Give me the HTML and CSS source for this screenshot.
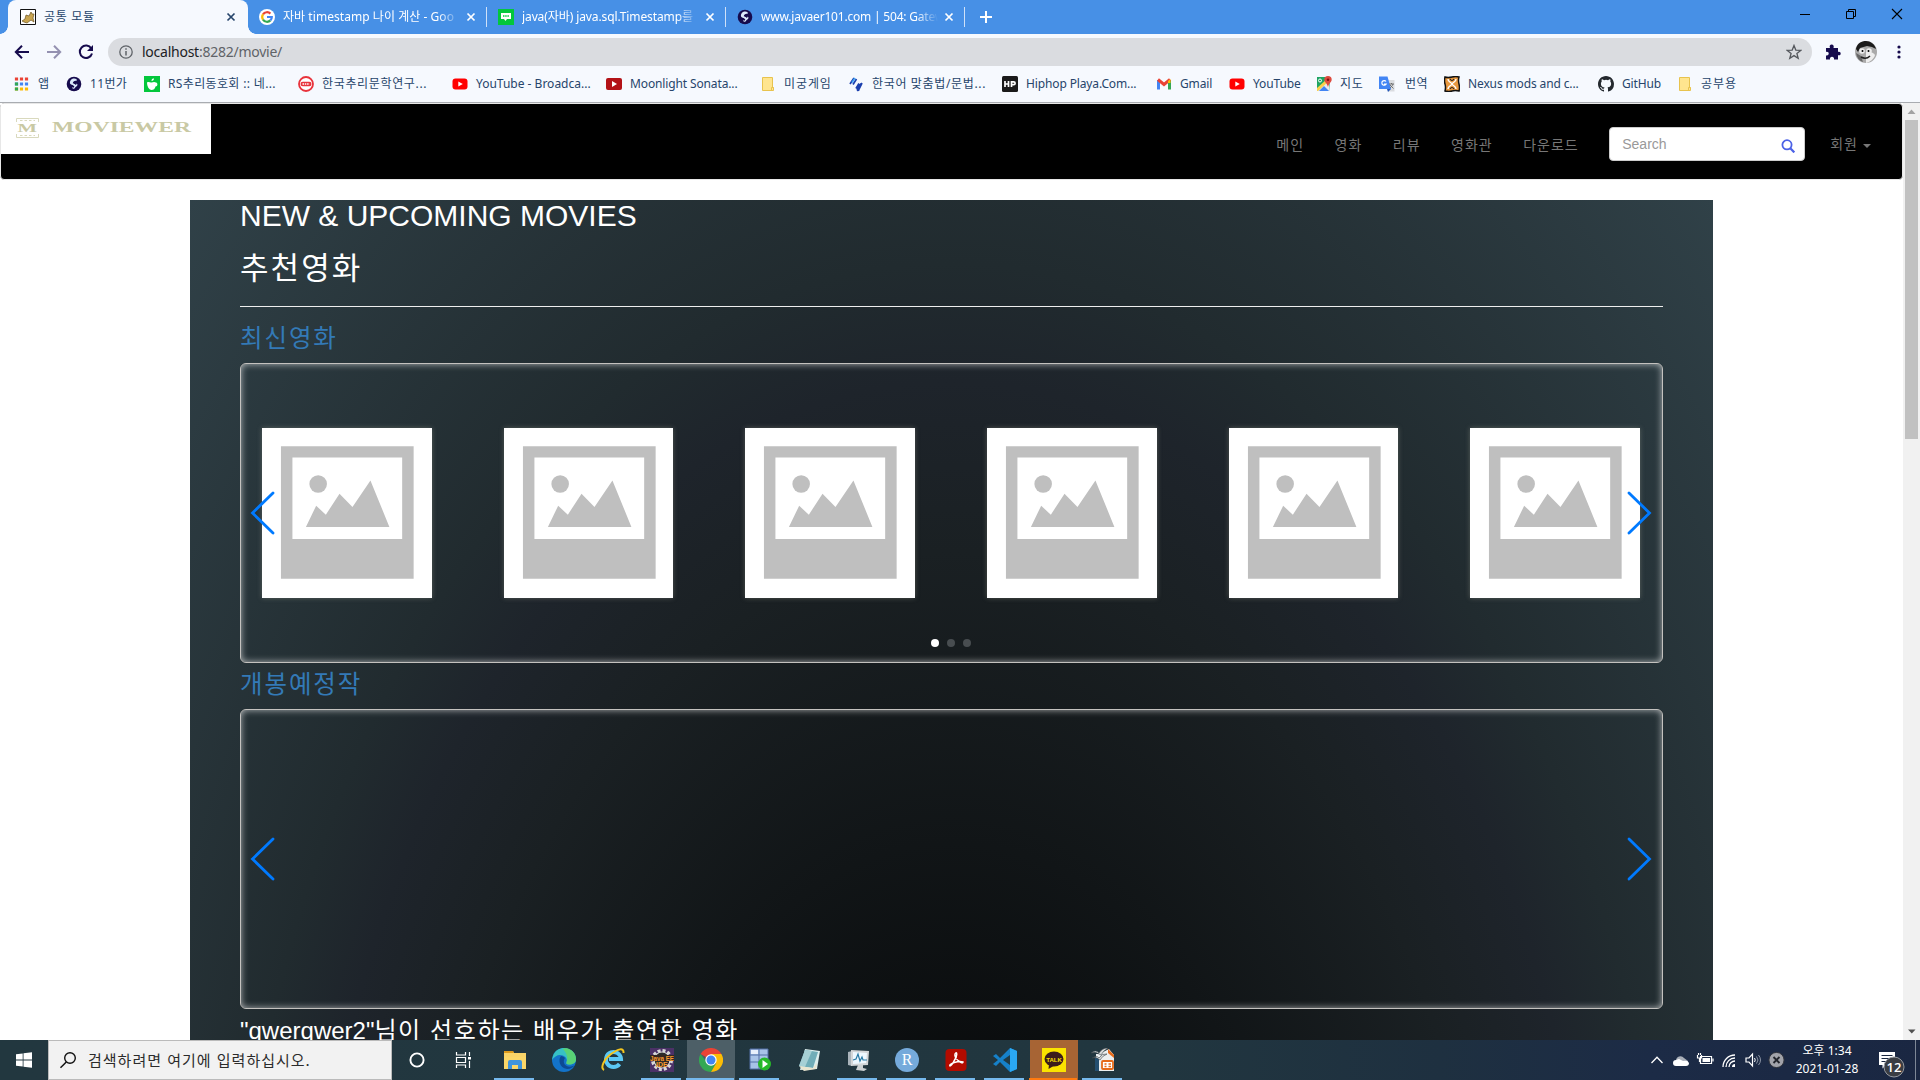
FILE: index.html
```html
<!DOCTYPE html>
<html lang="ko">
<head>
<meta charset="utf-8">
<title>공통 모듈</title>
<link rel="stylesheet" href="styles.css">
</head>
<body>
<svg class="defs" width="0" height="0" aria-hidden="true">
  <symbol id="close" viewBox="0 0 10 10"><path d="M1.500 1.500l7 7M8.500 1.500l-7 7" stroke="currentColor" stroke-width="1.700" fill="none"/></symbol>
  <symbol id="globe" viewBox="0 0 16 16"><circle cx="8" cy="8" r="7.300" fill="#160b4d"/><path d="M6 3c3-1 5 0 5 1.500C9 5 8 4.500 7.500 6c-1 1.500 3 1 4 2.500 0 2-2 2-3 4-2 1-3-.5-1.500-2C8.500 9 5 9 4 7.500 3.500 5.500 4.500 4 6 3z" fill="#dbe9fb"/><path d="M7 6.500c1.500.5 2.500.5 3 2M6 10l2 1" stroke="#160b4d" stroke-width="1.500"/></symbol>
  <symbol id="youtube" viewBox="0 0 16 16"><rect x=".5" y="2.500" width="15" height="11" rx="3" fill="#f00"/><path d="M6.300 5.500l4.500 2.500-4.500 2.500z" fill="#fff"/></symbol>
  <symbol id="folder" viewBox="0 0 16 16"><path d="M2.500 1.500h10v10h1v3h-11z" fill="#ffe58f" stroke="#e8c34e"/><path d="M11.500 14.500v-3h2" fill="none" stroke="#e8c34e"/></symbol>
  <symbol id="poster" viewBox="0 0 170 170"><path d="M0 0h170v170H0z" fill="#fff"/><path d="M19 18h133v133H19z" fill="#bfbfbf"/><path d="M30.500 29.300h110V111h-110z" fill="#fff"/><circle cx="56.300" cy="56" r="8.800" fill="#bfbfbf"/><path d="M44 99l10.300-21.300 9.700 9 13.700-21L90.700 79l18-26.700L127.700 99z" fill="#bfbfbf"/></symbol>
  <symbol id="prev" viewBox="0 0 27 44"><path d="M24 2L3.500 22 24 42" fill="none" stroke="#007aff" stroke-width="2.800" stroke-linecap="round"/></symbol>
  <symbol id="next" viewBox="0 0 27 44"><path d="M3 2l20.500 20L3 42" fill="none" stroke="#007aff" stroke-width="2.800" stroke-linecap="round"/></symbol>
</svg>

<header class="tabstrip">
  <div class="tab active">
    <svg class="ico" viewBox="0 0 16 16"><path d="M.5.5h15v15H.5z" fill="#fff" stroke="#111"/><path d="M2 12l3-2 1-4 3 1 2-4 1 2h2l-1 4 1 4-3-2-4 3-3-1z" fill="#c9a551" stroke="#6d5520" stroke-width=".7"/></svg>
    <span class="tab-title t1">공통 모듈</span><svg class="x"><use href="#close"/></svg>
  </div>
  <div class="tab">
    <svg class="ico" viewBox="0 0 16 16"><circle cx="8" cy="8" r="8" fill="#fff"/><g fill="none" stroke-width="2.200"><path d="M11.400 4.600A4.800 4.800 0 0 0 4 5.400" stroke="#ea4335"/><path d="M4 5.400a4.800 4.800 0 0 0 0 5.200" stroke="#fbbc05"/><path d="M4 10.600a4.800 4.800 0 0 0 7.400.8" stroke="#34a853"/><path d="M11.400 11.400A4.800 4.800 0 0 0 12.800 8H8" stroke="#4285f4"/></g></svg>
    <span class="tab-title t2">자바 timestamp 나이 계산 - Goo</span><svg class="x"><use href="#close"/></svg>
  </div>
  <div class="tab">
    <svg class="ico" viewBox="0 0 16 16"><path d="M0 0h16v16H0z" fill="#03c73c"/><path d="M3 4h10v6H9l-1.500 2L6 10H3z" fill="#fff"/><path d="M5 7h6" stroke="#03c73c" stroke-width="1.500" stroke-dasharray="1.500 .7"/></svg>
    <span class="tab-title t3">java(자바) java.sql.Timestamp를</span><svg class="x"><use href="#close"/></svg>
  </div>
  <div class="tab">
    <svg class="ico"><use href="#globe"/></svg>
    <span class="tab-title t4">www.javaer101.com | 504: Gatew</span><svg class="x"><use href="#close"/></svg>
  </div>
  <svg class="plus" viewBox="0 0 14 14"><path d="M7 1v12M1 7h12" stroke="#fff" stroke-width="2"/></svg>
  <div class="winbtns">
    <svg viewBox="0 0 12 12"><path d="M1 6.500h10" stroke="#000"/></svg>
    <svg viewBox="0 0 12 12"><path d="M1.500 3.500h7v7h-7zM3.500 3.500v-2h7v7h-2" fill="none" stroke="#000"/></svg>
    <svg viewBox="0 0 12 12"><path d="M1 1l10 10M11 1L1 11" stroke="#000" stroke-width="1.100"/></svg>
  </div>
</header>

<div class="toolbar">
  <svg class="tool" viewBox="0 0 16 16"><path d="M15 8H2M8 1.800L1.800 8 8 14.200" fill="none" stroke="#160b4d" stroke-width="2"/></svg>
  <svg class="tool dim" viewBox="0 0 16 16"><path d="M1 8h13M8 1.800L14.200 8 8 14.200" fill="none" stroke="#160b4d" stroke-width="2"/></svg>
  <svg class="tool" viewBox="0 0 16 16"><path d="M13.300 4.500A6.200 6.200 0 1 0 14 9.500" fill="none" stroke="#160b4d" stroke-width="2"/><path d="M15 1v6H9z" fill="#160b4d"/></svg>
  <div class="omnibox">
    <svg class="info" viewBox="0 0 14 14"><circle cx="7" cy="7" r="6.200" fill="none" stroke="#5f6368" stroke-width="1.300"/><path d="M7 6v4.500M7 3.300v1.500" stroke="#5f6368" stroke-width="1.500"/></svg>
    <span class="url"><b>localhost</b>:8282/movie/</span>
    <svg class="star" viewBox="0 0 16 16"><path d="M8 1.500l1.800 4.600 4.900.3-3.800 3.100 1.300 4.800L8 11.600l-4.200 2.700 1.300-4.800-3.800-3.100 4.900-.3z" fill="none" stroke="#55585d" stroke-width="1.300"/></svg>
  </div>
  <svg class="puzzle" viewBox="0 0 16 16"><path d="M1 4h4c-1-2 .2-3.500 1.700-3.500S9.300 2 8.500 4H13v4c2-.6 2.700.7 2.700 1.700S14.500 11.800 13 11.200V15.500H9c.5-2-.8-2.800-2-2.800s-2.500 1-2 2.800H1v-4c2 .5 2.700-.8 2.700-1.900S2.700 7.500 1 8z" fill="#160b4d"/></svg>
  <svg class="avatar" viewBox="0 0 22 22"><circle cx="11" cy="11" r="11" fill="#aaa"/><path d="M1 8C2 2 7 0 11 0s9 3 10 8l-4-2-5-1-7 2-2 4z" fill="#1b1b1b"/><path d="M11 11c4-1 8 1 9 3-1 4-5 7-9 8z" fill="#eee"/><path d="M1 12q1 7 7 9l-2-6z" fill="#666"/><circle cx="7" cy="10" r="2.800" fill="#eee"/><circle cx="14" cy="10" r="2.800" fill="#eee"/><circle cx="7.500" cy="10" r="1"/><circle cx="13.500" cy="10" r="1"/><path d="M6 16q5 3 9-1" stroke="#222" fill="none" stroke-width="1.500"/></svg>
  <svg class="dots" viewBox="0 0 4 14"><g fill="#160b4d"><circle cx="2" cy="2" r="1.600"/><circle cx="2" cy="7" r="1.600"/><circle cx="2" cy="12" r="1.600"/></g></svg>
</div>

<nav class="bookmarks">
  <a><svg class="ico" viewBox="0 0 16 16"><g stroke-width="3.200" stroke-dasharray="3.200 1.800"><path d="M.9 3h13.200" stroke="#ea4335"/><path d="M.9 8h13.200" stroke="#4285f4"/><path d="M.9 13h13.200" stroke="#fbbc05"/></g><path d="M.9 6.400h3.200v3.200H.9zM.9 11.400h3.200v3.200H.9z" fill="#34a853"/></svg><span>앱</span></a>
  <a><svg class="ico"><use href="#globe"/></svg><span class="sp3">11번가</span></a>
  <a><svg class="ico" viewBox="0 0 16 16"><path d="M0 0h16v16H0z" fill="#03c73c"/><path d="M3 6.500c2-1 3 .3 4.500 0C9 6 10.500 5.500 12 6.500c2 .3 2 4-.5 4C11 13 9.500 14 7.500 14S3 11 3 6.500z" fill="#fff"/><path d="M7.500 5c0-2 1-2.500 2.500-2.500C10 4 9 5 7.500 5z" fill="#fff"/></svg><span class="sp3">RS추리동호회 :: 네...</span></a>
  <a><svg class="ico" viewBox="0 0 16 16"><circle cx="8" cy="8" r="7" fill="#fff" stroke="#e8333c" stroke-width="1.800"/><rect x="2.500" y="5.800" width="11" height="4.400" rx="2.200" fill="#e8333c"/><path d="M4.500 8h7" stroke="#fff" stroke-width="1.300" stroke-dasharray="1.500 .8"/></svg><span class="sp6">한국추리문학연구...</span></a>
  <a><svg class="ico"><use href="#youtube"/></svg><span>YouTube - Broadca...</span></a>
  <a><svg class="ico" viewBox="0 0 16 16"><rect y="2" width="16" height="12" rx="2" fill="#b31217"/><path d="M6 5l5 3-5 3z" fill="#fff"/></svg><span class="tight">Moonlight Sonata...</span></a>
  <a><svg class="ico"><use href="#folder"/></svg><span class="sp9">미궁게임</span></a>
  <a><svg class="ico" viewBox="0 0 16 16"><g fill="none" stroke="#1b3fae" stroke-width="1.700"><path d="M6 2L2 8M8.500 3L5 8.500"/><path d="M11 7.500l-3 5M14 7l-3 6c0 2-2 2-1.500 0L13 7.500"/></g><path d="M7 2L4 6.500" stroke="#42a5f5" stroke-width="1.500"/></svg><span class="sp6">한국어 맞춤법/문법...</span></a>
  <a><svg class="ico" viewBox="0 0 16 16"><rect width="16" height="16" rx="1.500" fill="#1a1a1a"/><path d="M3 5v6M6.500 5v6M3 8h3.500M9.500 11V5.800h2.200a1.300 1.300 0 0 1 0 2.800H9.500" fill="none" stroke="#fff" stroke-width="1.700"/></svg><span class="tight">Hiphop Playa.Com...</span></a>
  <a><svg class="ico" viewBox="0 0 16 16"><path d="M2.500 13.500V4" stroke="#4285f4" stroke-width="3"/><path d="M13.500 13.500V4" stroke="#34a853" stroke-width="3"/><path d="M2 3.500l6 5 6-5" fill="none" stroke="#ea4335" stroke-width="3"/><path d="M12 5l2.500-2v4H12z" fill="#fbbc05"/></svg><span class="tight">Gmail</span></a>
  <a><svg class="ico"><use href="#youtube"/></svg><span class="tight">YouTube</span></a>
  <a><svg class="ico" viewBox="0 0 16 16"><path d="M1 1h13v14H1z" fill="#1fa463"/><path d="M1 15L13 3l1 12z" fill="#e8eaed"/><path d="M3 15l5-5 5 5z" fill="#4285f4"/><path d="M1 12l10-9 2 2L2 15H1z" fill="#fbd14b"/><path d="M12 0a3.700 3.700 0 0 1 3.700 3.700C15.700 6 13 7 12 11c-1-4-3.700-5-3.700-7.300A3.700 3.700 0 0 1 12 0z" fill="#dd4b3e"/><circle cx="12" cy="3.700" r="1.300" fill="#811"/><circle cx="4" cy="4.500" r="1.500" fill="none" stroke="#fff"/></svg><span class="sp6">지도</span></a>
  <a><svg class="ico" viewBox="0 0 16 16"><path d="M6 4h9.500v11.500H9z" fill="#dadce0"/><path d="M0 .5h8.500L12 13H0z" fill="#4285f4"/><path d="M8 13h4l-3 3z" fill="#2558b8"/><path d="M7 5.500A2.300 2.300 0 1 0 7.200 8H5" fill="none" stroke="#fff" stroke-width="1.200"/><path d="M10 8h5M12.500 7v1M14 8c-.5 2-2 3-3 4M11 9l3.500 3.500" stroke="#666" fill="none" stroke-width=".9"/></svg><span class="nudge">번역</span></a>
  <a><svg class="ico" viewBox="0 0 16 16"><path d="M1 1q3 1 7 0t7 0q-1 3 0 7t0 7q-4-1-7 0t-7 0q1-4 0-7t0-7z" fill="#e8983f" stroke="#111" stroke-width="1.500"/><path d="M4 3c0 3 3 3 4 5-1 2-4 2-4 5M12 3c0 3-3 3-4 5 1 2 4 2 4 5" fill="none" stroke="#fff" stroke-width="1.400"/><path d="M6 3q2 3 4 0M6 13q2-3 4 0" fill="none" stroke="#222" stroke-width="1.100"/></svg><span class="tight">Nexus mods and c...</span></a>
  <a><svg class="ico" viewBox="0 0 16 16"><path fill="#24292e" d="M8 0C3.580 0 0 3.580 0 8c0 3.540 2.290 6.530 5.470 7.590.4.070.55-.17.55-.38 0-.19-.01-.82-.01-1.490-2.010.37-2.530-.49-2.690-.94-.09-.23-.48-.94-.82-1.130-.28-.15-.68-.52-.01-.53.63-.01 1.080.58 1.230.82.72 1.210 1.870.87 2.330.66.07-.52.28-.87.51-1.070-1.780-.2-3.640-.89-3.640-3.950 0-.87.31-1.590.82-2.150-.08-.2-.36-1.020.08-2.120 0 0 .67-.21 2.200.82a7.600 7.600 0 0 1 4 0c1.530-1.040 2.200-.82 2.200-.82.44 1.100.16 1.920.08 2.120.51.56.82 1.270.82 2.150 0 3.070-1.870 3.750-3.650 3.950.29.25.54.73.54 1.480 0 1.070-.01 1.930-.01 2.200 0 .21.15.46.55.38A8 8 0 0 0 16 8c0-4.420-3.580-8-8-8z"/></svg><span class="tight">GitHub</span></a>
  <a><svg class="ico"><use href="#folder"/></svg><span class="sp9">공부용</span></a>
</nav>

<main class="viewport">
  <div class="page">
    <div class="navbar">
      <svg class="logo" viewBox="0 0 210 50"><path d="M0 0h210v50H0z" fill="#fff"/><g fill="none" stroke="#d9d9bd"><path d="M15.500 18v-3.500h22V18M15.500 30v3.500h22V30"/><path d="M19 16.500h15M19 31.500h15" stroke-dasharray="2.500 2"/></g><g fill="#c9c9a4" font-family="Liberation Serif, serif" font-weight="bold"><text x="16.500" y="28" font-size="13" textLength="19.500" lengthAdjust="spacingAndGlyphs">M</text><text x="51" y="28" font-size="14" textLength="139" lengthAdjust="spacingAndGlyphs">MOVIEWER</text></g></svg>
      <div class="menu">
        <a>메인</a><a>영화</a><a>리뷰</a><a>영화관</a><a>다운로드</a>
        <div class="search"><span>Search</span><svg viewBox="0 0 14 14"><circle cx="6" cy="5.800" r="4.600" fill="none" stroke="#4c62e6" stroke-width="1.800"/><path d="M9.300 9.200l4 4.200" stroke="#4c62e6" stroke-width="2.200"/></svg></div>
        <a class="member">회원<i></i></a>
      </div>
    </div>
    <div class="container">
      <h2 class="en">NEW &amp; UPCOMING MOVIES</h2>
      <h2 class="ko">추천영화</h2>
      <hr>
      <h3 class="ko first"><a>최신영화</a></h3>
      <section class="swiper">
        <div class="slides">
          <svg><use href="#poster"/></svg><svg><use href="#poster"/></svg><svg><use href="#poster"/></svg><svg><use href="#poster"/></svg><svg><use href="#poster"/></svg><svg><use href="#poster"/></svg>
        </div>
        <svg class="arrow left"><use href="#prev"/></svg>
        <svg class="arrow right"><use href="#next"/></svg>
        <div class="bullets"><i class="on"></i><i></i><i></i></div>
      </section>
      <h3 class="ko"><a>개봉예정작</a></h3>
      <section class="swiper">
        <svg class="arrow left"><use href="#prev"/></svg>
        <svg class="arrow right"><use href="#next"/></svg>
      </section>
      <h3 class="pref">"qwerqwer2"<span>님이 선호하는 배우가 출연한 영화</span></h3>
    </div>
  </div>
  <div class="scrollbar">
    <svg viewBox="0 0 17 17"><path d="M4.500 11l4-4.500 4 4.500z" fill="#a3a3a3"/></svg>
    <div class="track"><div class="thumb"></div></div>
    <svg viewBox="0 0 17 17"><path d="M5 6.500h7.500l-3.700 4z" fill="#505050"/></svg>
  </div>
</main>

<footer class="taskbar">
  <div class="start"><svg viewBox="0 0 16 16"><path d="M0 2.300l6.700-.9v6.200H0zM7.500 1.300L16 .2v7.400H7.500zM0 8.400h6.700v6.200L0 13.700zM7.500 8.400H16v7.400l-8.500-1.100z" fill="#fff"/></svg></div>
  <div class="find"><svg viewBox="0 0 18 18"><circle cx="11" cy="7" r="5.300" fill="none" stroke="#111" stroke-width="1.400"/><path d="M7.300 11L1.500 16.800" stroke="#111" stroke-width="1.500"/></svg><span>검색하려면 여기에 입력하십시오.</span></div>
  <div class="apps">
    <div class="app"><svg viewBox="0 0 24 24"><circle cx="12" cy="12" r="6.600" fill="none" stroke="#fff" stroke-width="1.900"/></svg></div>
    <div class="app view"><svg viewBox="0 0 24 24"><path d="M4.500 4v3h9V4M4.500 20v-3h9v3M4.500 9.500h9v5h-9zM17.500 4v4M17.500 13v7" fill="none" stroke="#fff" stroke-width="1.200"/><path d="M16 9h3v2.500h-3z" fill="#fff"/></svg></div>
    <div class="app run"><svg viewBox="0 0 24 24"><path d="M1 3h9l1 2h12v16H1z" fill="#f9d468"/><path d="M1 3h9l1 2H1z" fill="#dd9a1c"/><path d="M1 9h22v12H1z" fill="#fbd768"/><path d="M5 21v-7q0-2 2-2h10q2 0 2 2v7h-4v-4H9v4z" fill="#3f94dc"/></svg></div>
    <div class="app"><svg viewBox="0 0 24 24"><circle cx="12" cy="12" r="12" fill="#1373c9"/><path d="M1 8C3 2 8 0 12 0c7 0 12 5 12 11 0 4-3 5.500-7 5.500-3 0-3-1-2.500-2.500C16 10 12 7 8 7 5 7 2 9 0 12z" fill="#37c1c4"/><path d="M14 0c6 1 10 6 10 11 0 4-3 5.500-7 5.500-2 0-3-.7-2.500-2.500 2-4 0-10-4-13z" fill="#66d75b" opacity=".75"/><path d="M9 8c-3 3-2 12 6 13 4 0 6-2 7.500-3.500-4 2-9 1.500-10.500-2.500-.5-2 0-4 1-5-1-1-2.500-2-4-2z" fill="#0c4a94"/></svg></div>
    <div class="app"><svg viewBox="0 0 24 24"><path d="M18.500 16A7.500 7.500 0 1 1 20 11H8" fill="none" stroke="#5bc9f5" stroke-width="4"/><path d="M3 22C-1 20 3 11 10 6S23-1 22.500 5" fill="none" stroke="#f4c51d" stroke-width="2"/></svg></div>
    <div class="app run"><svg viewBox="0 0 24 24"><path d="M0 0h24v24H0z" fill="#4b3167"/><circle cx="12" cy="12" r="9.500" fill="none" stroke="#d9d9d9" stroke-width="3" stroke-dasharray="3 2"/><circle cx="12" cy="12" r="8" fill="#2b2b2b" stroke="#ddd" stroke-width="1.200"/><path d="M0 7h24v6H0z" fill="#33261f"/><g fill="#f79a2f" font-family="Liberation Sans, sans-serif" font-weight="bold" font-size="7"><text x="0" y="12.500" textLength="24" lengthAdjust="spacingAndGlyphs">Java EE</text><text x="6" y="19">IDE</text></g></svg></div>
    <div class="app current"><svg viewBox="0 0 24 24"><path d="M12 12L1.600 6A12 12 0 0 1 22.400 6z" fill="#ea4335"/><path d="M12 12l-6 0L1.600 6A12 12 0 0 0 12 24l5-9z" fill="#34a853"/><path d="M12 6h10.400A12 12 0 0 1 12 24l5.200-9z" fill="#fbbc05"/><circle cx="12" cy="12" r="5.700" fill="#fff"/><circle cx="12" cy="12" r="4.500" fill="#4285f4"/></svg></div>
    <div class="app run"><svg viewBox="0 0 24 24"><path d="M2 1h18v20H2z" fill="#a8c3e8"/><path d="M2 7h18M2 14h18M11 1v20M2 1h18v20H2z" stroke="#526fa5" fill="none"/><path d="M3 2h7v4H3z" fill="#e7effc"/><circle cx="16.500" cy="16" r="6.500" fill="#27b82a"/><path d="M14.500 12l5.500 4-5.500 4z" fill="#fff"/></svg></div>
    <div class="app"><svg viewBox="0 0 24 24"><path d="M8 1l15 2-3 18-17 1z" fill="#dbeeee"/><path d="M8 2l13 2-5 16-14-2z" fill="#70adb8"/><path d="M8 2l7 1-7 16-6-1z" fill="#a6d0d5"/><path d="M2 18l14 2 4-5-1 6-12 2z" fill="#e9e5cf"/></svg></div>
    <div class="app run"><svg viewBox="0 0 24 24"><path d="M2 4l4-1v15l-4-1z" fill="#aab4bb"/><path d="M5 2l18 1-1 14-17 1z" fill="#d3d6d8"/><path d="M7 4l14 1-1 10-13 1z" fill="#edf8ff"/><path d="M7 12l3-1 2-5 2 7 2-4 1 3h4" fill="none" stroke="#2679a5" stroke-width="1.200"/><path d="M12 17h5v3l4 1-3 2-8-1z" fill="#ccd1d3"/></svg></div>
    <div class="app run"><svg viewBox="0 0 24 24"><circle cx="12" cy="12" r="12" fill="#75aadb"/><text x="12" y="17" font-family="Liberation Serif, serif" font-size="16" text-anchor="middle" fill="#fff">R</text></svg></div>
    <div class="app run"><svg viewBox="0 0 24 24"><rect x="1.500" y="1" width="21" height="22" rx="4" fill="#b30b00"/><path d="M6 18c-2-2 9-6 13-4 0 3-9-3-8-8 2-4 3 2-1 7-2 4-3 5-4 5z" fill="none" stroke="#fff" stroke-width="1.500"/></svg></div>
    <div class="app run"><svg viewBox="0 0 24 24"><path d="M17 0l7 3v18l-7 3L7 14l-4 4-3-2 5-4-5-4 3-2 4 4z" fill="#1681c9"/><path d="M17 0l7 3v18l-7 3z" fill="#2aa7f3"/><path d="M17 7l-7 5 7 5z" fill="#203b46"/></svg></div>
    <div class="app talk"><svg viewBox="0 0 24 24"><path d="M0 0h24v24H0z" fill="#fbe300"/><ellipse cx="12" cy="11" rx="9.500" ry="7.500" fill="#3b1c1c"/><path d="M7 16l-.5 5 5-3z" fill="#3b1c1c"/><text x="12" y="13.500" font-family="Liberation Sans, sans-serif" font-weight="bold" font-size="6" text-anchor="middle" fill="#fbe300">TALK</text></svg></div>
    <div class="app run"><svg viewBox="0 0 24 24"><path d="M5 6h3l10-5 5 6v16H5z" fill="#eceff0"/><path d="M4 10h4v13H4z" fill="#244f70"/><path d="M17 1l6 6v3l-6-5z" fill="#e66a19"/><path d="M0 5q5-4 8 0 3-5 9-5-5 3-7 7-5-4-10-2zM1 10q5-3 7 0 3-5 8-4-5 2-7 6-4-4-8-2z" fill="#d7dadb" stroke="#3c464b" stroke-width=".6"/><rect x="11" y="13" width="11" height="8" rx="1" fill="#fff" stroke="#e66a19" stroke-width="1.800"/><path d="M13.500 16h2M13.500 18.500h2M17.500 16h2.500M17.500 18.500h2.500" stroke="#e66a19" stroke-width="1.500"/></svg></div>
  </div>
  <div class="tray">
    <svg viewBox="0 0 18 18"><path d="M3.500 12L9 6.200l5.500 5.800" fill="none" stroke="#fff" stroke-width="1.300"/></svg>
    <svg viewBox="0 0 18 18"><path d="M4 10a4.500 4.500 0 0 1 8-3l4 3-1 4H4z" fill="#a8aeb8"/><path d="M1 12q0-3 3-3l3-1 4 2q5-1 6 2 0 3-3 3H4q-3 0-3-3z" fill="#fff"/></svg>
    <svg viewBox="0 0 18 18"><path d="M4.500 5.500h11v7h-11zM17 7.500v3M1.500 4v3h4V4M2.500 2v2M4.500 2v2M3.500 7v4" fill="none" stroke="#fff" stroke-width="1.200"/><path d="M6.500 7h7.500v4H6.500z" fill="#fff"/></svg>
    <svg viewBox="0 0 18 18"><g fill="none" stroke="#fff" stroke-width="1.300"><path d="M3 16A12 12 0 0 1 15 4M6 16a9 9 0 0 1 9-9M9 16a6 6 0 0 1 6-6"/></g><path d="M12 16a3 3 0 0 1 3-3v3z" fill="#fff"/></svg>
    <svg viewBox="0 0 18 18"><path d="M2 7h3l3.500-4v12L5 11H2z" fill="none" stroke="#fff" stroke-width="1.200"/><path d="M10.500 7q1.500 2 0 4" fill="none" stroke="#fff"/><path d="M12.500 5.500q3 3.500 0 7M14.500 4q4 5 0 10" fill="none" stroke="#8c95a5"/></svg>
    <svg viewBox="0 0 18 18"><circle cx="8.500" cy="9" r="7.600" fill="#a1a3aa" stroke="#30333b"/><path d="M5.500 6l6 6M11.500 6l-6 6" stroke="#22252c" stroke-width="1.900"/></svg>
  </div>
  <div class="clock"><span>오후 1:34</span><span>2021-01-28</span></div>
  <div class="notice"><svg viewBox="0 0 30 32"><path d="M1 6h16v13H8l-3.500 3.500V19H1z" fill="#fff"/><path d="M3.500 9.500h11M3.500 12.500h11M3.500 15.500h7" stroke="#1a2740"/><circle cx="16" cy="21" r="10" fill="#3a3d43" stroke="#969aa0"/><text x="16" y="25.500" text-anchor="middle" font-family="Open Sans, sans-serif" font-size="13" font-weight="600" fill="#fff">12</text></svg></div>
</footer>
</body>
</html>
```
FILE: styles.css
```css
* { box-sizing: border-box; }
body { margin: 0; width: 1920px; height: 1080px; overflow: hidden; display: flex; flex-direction: column; background: #fff; font-family: "Noto Sans", "Noto Sans CJK KR", sans-serif; font-size: 12px; }
svg { display: block; flex: none; }
.defs { position: absolute; }
.ico { width: 16px; height: 16px; }

.tabstrip { height: 34px; flex: none; background: #4790e6; display: flex; align-items: center; padding-left: 8px; }
.tab { width: 239px; height: 34px; display: flex; align-items: center; padding: 0 11px; color: #fff; position: relative; }
.tab.active { width: 240px; padding: 0 12px; background: #f6f9fe; color: #27456b; border-radius: 8px 8px 0 0; }
.tab.active::before, .tab.active::after { content: ""; position: absolute; bottom: 0; width: 8px; height: 8px; }
.tab.active::before { left: -8px; background: radial-gradient(circle at 0 0, transparent 7.5px, #f6f9fe 8px); }
.tab.active::after { right: -8px; background: radial-gradient(circle at 100% 0, transparent 7.5px, #f6f9fe 8px); }
.tab + .tab::before { content: ""; position: absolute; right: 0; top: 7px; width: 1px; height: 20px; background: #cfe1f8; }
.tab-title { margin-left: 8px; width: 180px; white-space: nowrap; line-height: 20px; }
.tab:not(.active) .tab-title { -webkit-mask-image: linear-gradient(90deg, #000 155px, transparent 177px); mask-image: linear-gradient(90deg, #000 155px, transparent 177px); }
.t1 { letter-spacing: .7px; }
.t2 { letter-spacing: .05px; }
.t3 { letter-spacing: -.1px; }
.t4 { letter-spacing: -.2px; }
.x { width: 10px; height: 10px; margin-left: auto; }
.plus { width: 14px; height: 14px; margin: 0 0 0 14px; }
.winbtns { margin-left: auto; display: flex; gap: 34px; padding: 0 17px 6px 0; }
.winbtns svg { width: 12px; height: 12px; }

.toolbar { height: 36px; flex: none; background: #f6f9fe; display: flex; align-items: center; padding-left: 14px; }
.tool { width: 16px; height: 16px; margin-right: 16px; }
.tool:nth-child(3) { margin-right: 14px; }
.dim { opacity: .43; }
.omnibox { width: 1704px; height: 28px; border-radius: 14px; background: #dadce0; display: flex; align-items: center; padding: 0 10px 0 11px; }
.info { width: 14px; height: 14px; }
.url { margin-left: 9px; font-size: 14px; line-height: 20px; color: #5f6368; letter-spacing: -.25px; }
.url b { font-weight: 400; color: #202124; }
.star { width: 16px; height: 16px; margin-left: auto; }
.puzzle { width: 16px; height: 16px; margin-left: 13px; }
.avatar { width: 22px; height: 22px; margin-left: 14px; }
.dots { width: 4px; height: 14px; margin-left: 20px; }

.bookmarks { height: 33px; flex: none; background: #f6f9fe; border-bottom: 1px solid #a9acb1; display: grid; grid-template-columns: 52px 78px 154px 154px 154px 154px 88px 154px 154px 73px 87px 63px 65px 154px 79px 100px; padding: 0 0 5px 14px; align-items: center; color: #27456b; }
.bookmarks a { display: flex; align-items: center; gap: 8px; white-space: nowrap; line-height: 20px; }
.sp3 { letter-spacing: .35px; }
.sp6 { letter-spacing: .65px; }
.sp9 { letter-spacing: .9px; }
.tight { letter-spacing: -.13px; }
.nudge { padding-left: 2px; letter-spacing: .5px; }

.viewport { height: 937px; flex: none; display: flex; overflow: hidden; }
.page { width: 1903px; height: 937px; overflow: hidden; }
.navbar { height: 77px; background: #000; border: 1px solid #e7e7e7; border-radius: 4px; display: flex; justify-content: space-between; }
.logo { width: 210px; height: 50px; }
.menu { display: flex; align-items: center; height: 81px; color: #777; font: 14px/20px "Liberation Sans", "Noto Sans CJK KR", sans-serif; letter-spacing: 1px; padding-right: 31px; }
.menu > a { margin-right: 30.5px; white-space: nowrap; }
.search { width: 196px; height: 34px; margin-top: -2px; border: 1px solid #ccc; border-radius: 4px; background: #fff; color: #999; display: flex; align-items: center; justify-content: space-between; padding: 0 9px 0 12px; letter-spacing: 0; }
.search svg { width: 14px; height: 14px; margin-top: 4px; }
.menu .member { margin: -1px 0 0 25px; display: flex; align-items: center; }
.member i { margin: 3px 0 0 5px; border: 4px solid transparent; border-top-color: #777; border-bottom: 0; }

.container { width: 1523px; height: 2400px; margin: 20px auto 0; padding: 0 50px; color: #fff; background: radial-gradient(ellipse farthest-corner at center, #000 0%, #1a2023 50%, #1e242b 60%, #212b2f 67%, #304148 100%); font-family: "Liberation Sans", "Noto Sans CJK KR", sans-serif; }
h2, h3 { font-weight: 400; margin: 0; white-space: nowrap; }
h2 { font-size: 30px; line-height: 33px; height: 33px; }
h2.en { line-height: 31px; }
h2.ko { margin-top: 19px; font-size: 31px; letter-spacing: 2.1px; }
hr { border: 0; height: 1px; background: #eee; margin: 21px 0 0; }
h3 { font-size: 24px; line-height: 26px; height: 26px; margin: 9px 0 11px; }
h3.ko { font-size: 24.5px; letter-spacing: 1.9px; color: #337ab7; }
h3.first { margin: 19px 0 11px; }
.pref span { letter-spacing: 1.6px; }
.swiper { height: 300px; border: 1px solid #c4c2bf; border-radius: 6px; box-shadow: inset 0 0 7px rgba(255, 255, 255, .65); position: relative; display: flex; align-items: center; }
.slides { flex: 1; display: flex; justify-content: space-between; padding: 0 22px 0 21px; }
.slides svg { width: 169.6px; height: 170px; background: #fff; box-shadow: 0 0 5px rgba(180, 180, 160, .35); }
.arrow { position: absolute; top: 127px; width: 27px; height: 44px; }
.left { left: 8px; }
.right { right: 9px; }
.bullets { position: absolute; bottom: 15px; left: 0; right: 1px; display: flex; justify-content: center; gap: 8px; }
.bullets i { width: 8px; height: 8px; border-radius: 50%; background: #484d50; }
.bullets .on { background: #fff; }

.scrollbar { width: 17px; background: #f1f1f1; display: flex; flex-direction: column; }
.scrollbar svg { width: 17px; height: 17px; }
.track { flex: 1; padding: 0 2px; }
.thumb { height: 319px; background: #c1c1c1; }

.taskbar { height: 40px; flex: none; display: flex; background: linear-gradient(90deg, #22373f 0%, #21363f 60%, #1e3040 75%, #1c2b46 86%, #1a2742 100%); color: #fff; }
.start { width: 48px; display: grid; place-items: center; }
.start svg { width: 16px; height: 16px; }
.find { width: 344px; background: #f2f2f2; border: 1px solid #bbb; display: flex; align-items: center; padding-left: 10px; color: #2b2b2b; font-size: 15px; }
.find svg { width: 18px; height: 18px; }
.find span { margin: -2px 0 0 11px; white-space: nowrap; letter-spacing: 1px; font-family: "Noto Sans CJK KR", sans-serif; }
.apps { display: flex; }
.app { width: 49px; height: 40px; display: grid; place-items: center; position: relative; }
.app svg { width: 24px; height: 24px; }
.app.view svg { margin-right: 3px; }
.run::after, .current::after, .talk::after { content: ""; position: absolute; left: 4px; right: 5px; bottom: 0; height: 2px; background: #76b9ed; }
.current { background: linear-gradient(#4d5f67, #4d5f67) center / 48px 40px no-repeat; }
.current::after, .talk::after { left: 0; right: 1px; }
.talk { background: linear-gradient(#a76434, #a76434) center / 48px 40px no-repeat; }
.talk::after { background: #ff7a0f; }
.tray { margin-left: auto; display: flex; align-items: center; gap: 6px; }
.tray svg { width: 18px; height: 18px; }
.clock { width: 84px; display: flex; flex-direction: column; align-items: center; justify-content: center; line-height: 18px; font-size: 12px; padding-right: 2px; }
.notice { width: 46px; border-right: 1px solid #7d8796; margin-right: 4px; padding: 6px 0 0 8px; }
.notice svg { width: 30px; height: 32px; }
```
